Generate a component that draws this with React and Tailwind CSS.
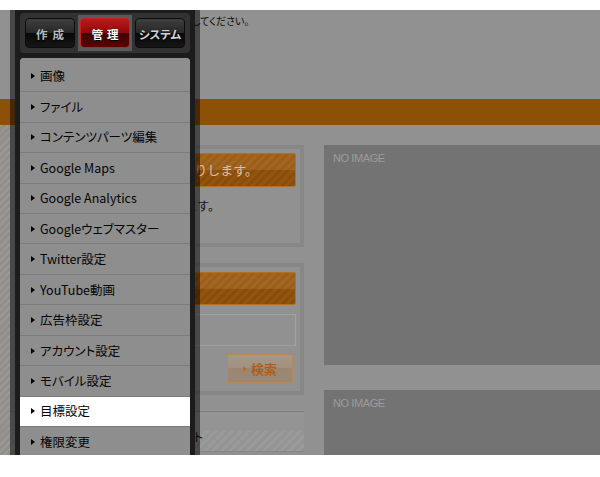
import React from "react";

const items = [
  "画像",
  "ファイル",
  "コンテンツパーツ編集",
  "Google Maps",
  "Google Analytics",
  "Googleウェブマスター",
  "Twitter設定",
  "YouTube動画",
  "広告枠設定",
  "アカウント設定",
  "モバイル設定",
  "目標設定",
  "権限変更",
];

function Tri({ className }) {
  return (
    <svg width="4" height="6" viewBox="0 0 4 6" className={className}>
      <path d="M0 0L4 3L0 6Z" fill="currentColor" />
    </svg>
  );
}

function Tab({ children, active }) {
  const cls = active
    ? "border-[#c62222] bg-[linear-gradient(to_bottom,#bb1a1a_0%,#8e0909_50%,#420000_50%,#560505_100%)] text-white"
    : "border-[#0c0c0c] bg-[linear-gradient(to_bottom,#3f3f3f_0%,#272727_50%,#080808_50%,#161616_100%)] text-[#b9b9b9]";
  return (
    <div
      className={`h-[30px] w-[50px] rounded-[4px] border ${cls} flex items-center justify-center pt-[2px] text-[11.5px] leading-[12px] font-bold [text-shadow:0_1px_1px_#000] [font-feature-settings:'palt']`}
    >
      {children}
    </div>
  );
}

const orangeBtn =
  "border border-[#b3701f] rounded-[2px] bg-[linear-gradient(to_bottom,rgba(255,255,255,0.07)_0%,rgba(255,255,255,0.07)_50%,rgba(0,0,0,0.06)_50%,rgba(0,0,0,0.06)_100%),repeating-linear-gradient(135deg,#93520a_0px,#93520a_3px,#9b5a12_3px,#9b5a12_6px)]";

export default function App() {
  return (
    <div className="w-[600px] h-[477px] bg-white overflow-hidden font-['Noto_Sans_CJK_JP',sans-serif]">
      <div className="relative mt-[10px] h-[445px] overflow-hidden bg-[#919191]">
        {/* dimmed page */}
        <div className="h-[89px] pt-[5px] pl-[192px] text-[10px] leading-[12px] text-[#0b0b0b] [font-feature-settings:'palt'] whitespace-nowrap">
          してください。
        </div>
        <div className="h-[26px] bg-[#8c5006]" />
        <div className="flex h-[330px]">
          <div className="w-[10px] h-full shrink-0 bg-[repeating-linear-gradient(135deg,#9d978f_0px,#9d978f_2px,#8f8f8f_2px,#8f8f8f_5px)]" />
          <div className="w-[294px] shrink-0 pt-[20px]">
            <div className="ml-[12px] h-[102px] border-[4px] border-[#878787] p-[4px]">
              <div
                className={`h-[34px] ${orangeBtn} flex items-center justify-end pr-[37px] text-[13px] text-[#d6c2a8] whitespace-nowrap`}
              >
                りします。
              </div>
              <div className="mt-[10px] text-right pr-[76px] text-[12px] leading-[18px] text-[#111] whitespace-nowrap">
                ます。
              </div>
            </div>
            <div className="ml-[12px] mt-[16px] h-[132px] border-[4px] border-[#878787] px-[4px] pt-[5px]">
              <div className={`h-[33px] ${orangeBtn}`} />
              <div className="mt-[9px] h-[32px] border border-[#a2a2a2]" />
              <div className="mt-[8px] flex justify-end pr-[3px]">
                <div className="h-[29px] w-[66px] border border-[#b8895a] rounded-[2px] bg-[linear-gradient(to_bottom,#a69886_0%,#a19080_50%,#9b8672_50%,#9d8874_100%)] flex items-center justify-center gap-[4px] text-[#b15e1a] text-[13px] font-bold">
                  <Tri className="text-[#c06a22]" />
                  <span>検索</span>
                </div>
              </div>
            </div>
            <div className="mt-[16px] h-[20px] border-t border-[#7e7e7e] bg-[#949494]" />
            <div className="h-[21px] border-b border-[#878787] bg-[repeating-linear-gradient(135deg,#9a9a9a_0px,#9a9a9a_3px,#949494_3px,#949494_6px)] text-right pr-[100px] text-[12px] leading-[12px] text-[#111] whitespace-nowrap">
              ト
            </div>
          </div>
          <div className="flex-1 ml-[20px] pt-[20px]">
            <div className="h-[220px] bg-[#737373] pl-[9px] pt-[8px]">
              <span className="block font-['Liberation_Sans',sans-serif] text-[11px] leading-[11px] tracking-[-0.4px] text-[#9c9c9c]">
                NO IMAGE
              </span>
            </div>
            <div className="mt-[25px] h-[120px] bg-[#737373] pl-[9px] pt-[8px]">
              <span className="block font-['Liberation_Sans',sans-serif] text-[11px] leading-[11px] tracking-[-0.4px] text-[#9c9c9c]">
                NO IMAGE
              </span>
            </div>
          </div>
        </div>

        {/* overlay menu panel */}
        <div className="absolute left-[10px] top-0 h-full w-[190px] bg-black/50 px-[5px]">
          <div className="h-full bg-[#1c1c1c] px-[5px] pt-[3px]">
            <div className="h-[40px] rounded-[4px] bg-[#323232] flex gap-[5px] p-[5px]">
              <Tab>
                <span className="flex gap-[5px]">
                  <span>作</span>
                  <span>成</span>
                </span>
              </Tab>
              <div className="-mx-[2px] -my-[3px] px-[2px] py-[3px] bg-[#5a5a5a]">
                <Tab active>
                  <span className="flex gap-[4px]">
                    <span>管</span>
                    <span>理</span>
                  </span>
                </Tab>
              </div>
              <Tab>
                <span className="text-[#d2d2d2]">システム</span>
              </Tab>
            </div>
            <div className="mt-[5px] rounded-t-[4px] bg-[#8e8e8e] overflow-hidden">
              {items.map((label, i) => {
                const hover = label === "目標設定";
                return (
                  <div
                    key={label}
                    className={`flex items-center gap-[5px] pl-[11px] border-b border-[#7b7b7b] text-[12.5px] leading-[14px] text-[#050505] whitespace-nowrap [font-feature-settings:'palt'] ${
                      i === 0 ? "h-[34.3px] pt-[3px]" : "h-[30.45px]"
                    } ${hover ? "bg-white" : "bg-[#8e8e8e]"}`}
                  >
                    <Tri className="text-black shrink-0" />
                    <span>{label}</span>
                  </div>
                );
              })}
            </div>
          </div>
        </div>
      </div>
    </div>
  );
}
